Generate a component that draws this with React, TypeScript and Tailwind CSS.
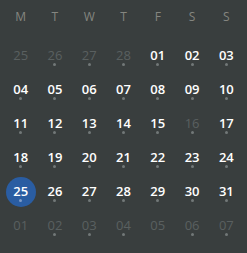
import React from "react";

// Month grid: each day has a label, whether it belongs to the shown month, and whether it has events
type Day = { label: string; dim?: boolean; dot?: boolean; selected?: boolean };

const HEADERS = ["M", "T", "W", "T", "F", "S", "S"];

const d = (label: string, dot = true, dim = false, selected = false): Day => ({ label, dot, dim, selected });

const DAYS: Day[] = [
  d("25", false, true), d("26", true, true), d("27", true, true), d("28", true, true), d("01"), d("02"), d("03"),
  d("04"), d("05"), d("06"), d("07"), d("08"), d("09"), d("10"),
  d("11"), d("12"), d("13"), d("14"), d("15"), d("16", true, true), d("17"),
  d("18"), d("19"), d("20"), d("21"), d("22"), d("23"), d("24"),
  d("25", true, false, true), d("26"), d("27"), d("28"), d("29"), d("30"), d("31"),
  d("01", false, true), d("02", true, true), d("03", true, true), d("04", true, true), d("05", false, true), d("06", true, true), d("07", true, true),
];

export default function App() {
  return (
    <div
      className="w-[247px] h-[253px] bg-[#393e3e] overflow-hidden"
      style={{ fontFamily: '"Open Sans", "Noto Sans", sans-serif' }}
    >
      <div className="w-[240px] mx-auto">
        {/* weekday header */}
        <div className="grid grid-cols-7 h-[34px] items-center">
          {HEADERS.map((h, i) => (
            <div key={i} className="text-center text-[12px] text-[#858680]">
              {h}
            </div>
          ))}
        </div>

        {/* day cells */}
        <div className="grid grid-cols-7 mt-[4px]">
          {DAYS.map((day, i) => (
            <div key={i} className="relative h-[34px] flex items-center justify-center">
              {day.selected && (
                <div className="absolute w-[30px] h-[30px] rounded-full bg-[#2a5da2] top-[3px]" />
              )}
              <span
                className={`relative text-[13px] leading-none ${
                  day.dim ? "text-[#5a6060] font-normal" : "text-white font-semibold"
                }`}
              >
                {day.label}
              </span>
              {day.dot && (
                <span
                  className={`absolute top-[25px] w-[3px] h-[3px] rounded-full ${
                    day.selected ? "bg-[#7f9cc6]" : "bg-[#727878]"
                  }`}
                />
              )}
            </div>
          ))}
        </div>
      </div>
    </div>
  );
}
